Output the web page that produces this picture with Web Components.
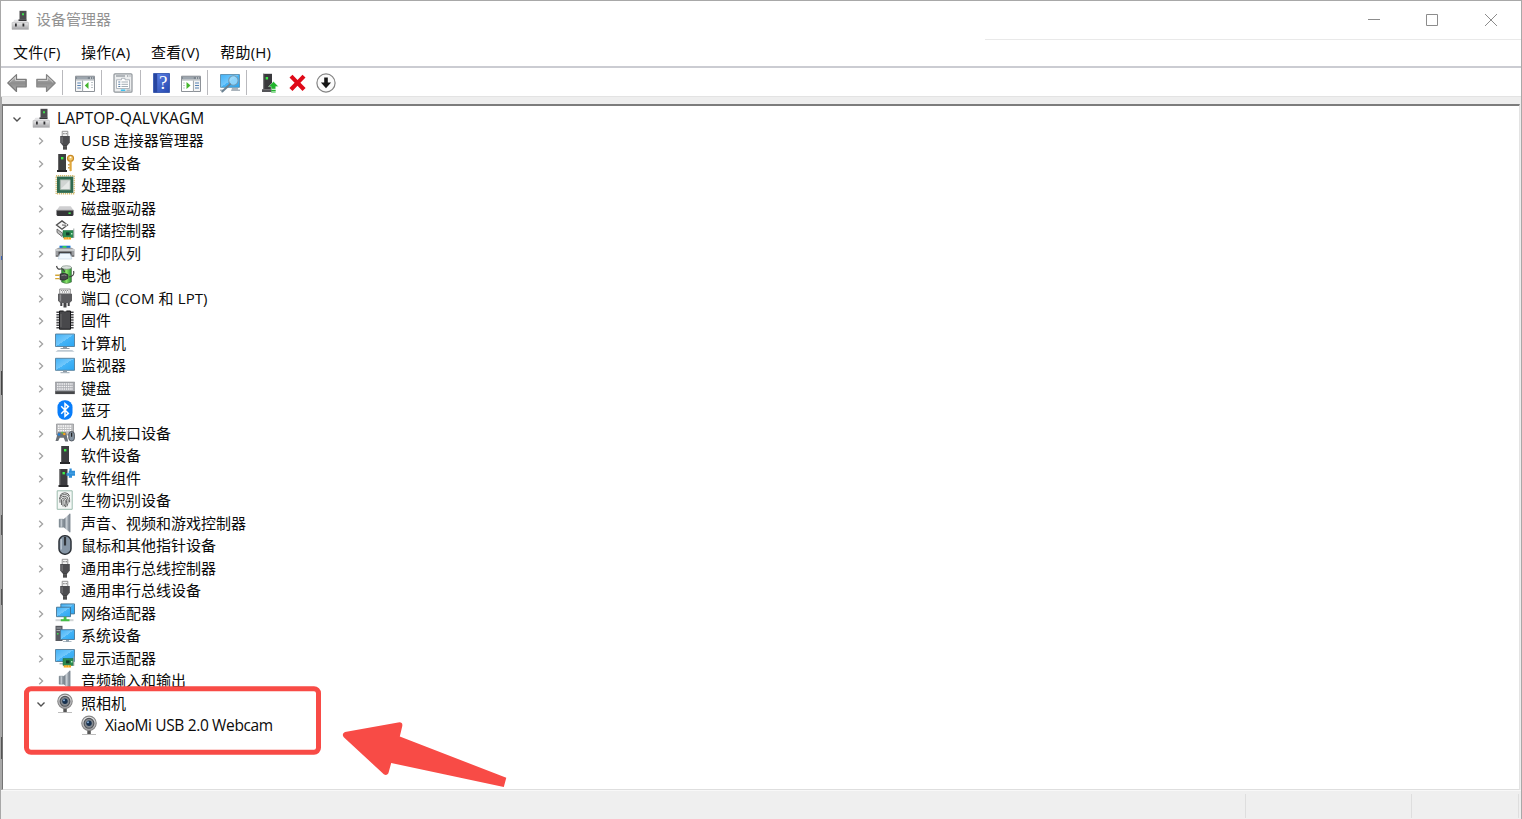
<!DOCTYPE html>
<html lang="zh-CN">
<head>
<meta charset="utf-8">
<title>设备管理器</title>
<style>
  html, body {
    margin: 0;
    height: 100%;
    overflow: hidden;
  }

  body {
    font-family: "Open Sans", "Noto Sans CJK SC", sans-serif;
    font-size: 15px;
    color: #0a0a0a;
  }
</style>
</head>
<body>
<dm-window>
  <dm-titlebar slot="title">设备管理器</dm-titlebar>
  <dm-menubar slot="menu">
    <span>文件(F)</span>
    <span>操作(A)</span>
    <span>查看(V)</span>
    <span>帮助(H)</span>
  </dm-menubar>
  <dm-toolbar slot="toolbar"></dm-toolbar>
  <dm-tree></dm-tree>
  <dm-statusbar slot="status"></dm-statusbar>
  <dm-highlight slot="overlay"></dm-highlight>
</dm-window>

<script>
const DEFS = `
  <defs>
    <linearGradient id="metal" x2="0" y2="1"><stop stop-color="#e9e9ea"/><stop offset="1" stop-color="#a3a3a6"/></linearGradient>
    <linearGradient id="screen" x2="1" y2="1"><stop stop-color="#43b1f5"/><stop offset=".5" stop-color="#72c8fc"/><stop offset=".5" stop-color="#45b4f7"/><stop offset="1" stop-color="#2ba6f2"/></linearGradient>
    <linearGradient id="arrow" x2="0" y2="1"><stop stop-color="#c9c9c9"/><stop offset=".5" stop-color="#8d8d8d"/><stop offset="1" stop-color="#b0b0b0"/></linearGradient>
    <linearGradient id="side"><stop stop-color="#5d6873"/><stop offset=".5" stop-color="#c9d0d6"/><stop offset="1" stop-color="#707b86"/></linearGradient>
    <linearGradient id="help" x2="1" y2="1"><stop stop-color="#6286ea"/><stop offset="1" stop-color="#2447ae"/></linearGradient>
    <linearGradient id="green"><stop stop-color="#1f8a2c"/><stop offset=".5" stop-color="#8be36a"/><stop offset="1" stop-color="#238c2b"/></linearGradient>
  </defs>`;

const TOWER = `<path d="M6 1h8v16H6z" fill="#3d3d40"/><path d="M6 1h1v16H6z" fill="#666"/><path d="M5 17h10v2H5z" fill="#29292b"/><path d="M9 4h2.4v2.4H9z" fill="#3df04a"/>`;
const USB = `<path d="M7.2 1.3h5.6V7H7.2z" fill="#f3f3f3" stroke="#8b8b8b" stroke-width=".9"/><path d="M8.3 3h1.2v1.3H8.3zM10.6 3h1.2v1.3h-1.2z" fill="#777"/><path d="M5.2 6h9.6v6.4l-2.3 3h-5l-2.3-3z" fill="#4d4d50"/><path d="M6.5 7h1.2v6H6.5z" fill="#77777a"/><path d="M8 15h4v4.6H8z" fill="#3c3c3e"/><path d="M8 16.4h4M8 18h4" stroke="#777" stroke-width=".6"/>`;
const SPEAKER = `<path d="M4.2 6.2h4.2v8H4.2z" fill="url(#side)" stroke="#72808b" stroke-width=".5"/><path d="M8.6 6.2L14.6.8v18.4l-6-5z" fill="url(#side)"/><path d="M14.8.8v18.4" stroke="#7d8791" stroke-width="1.3"/>`;
const CAMERA = `<path d="M8.3 15h3.5v4H8.3z" fill="#555"/><path d="M3 19.5h14" stroke="#b6b6b6" stroke-width=".9"/><circle cx="10" cy="8.3" r="7.2" fill="url(#metal)" stroke="#858585" stroke-width="1.1"/><circle cx="10" cy="8.3" r="4.9" fill="#858a90" stroke="#505357" stroke-width="1.1"/><circle cx="10" cy="8.3" r="2.7" fill="#17314f"/><circle cx="9" cy="7.2" r="1" fill="#86aed6"/>`;
const CARD = `<path d="M8 10.5h10.5v7H8z" fill="#2a8a50" stroke="#17693a" stroke-width=".5"/><path d="M18.8 8.5v9.3" stroke="#9da5a4" stroke-width="1"/><path d="M11 12.4h3.6v3H11z" fill="#123f2b"/><path d="M16 13h1.4v1.4H16z" fill="#b6efc6"/><path d="M8.7 17.3h7.3v2.2H8.7z" fill="#f2a51c"/><path d="M11 17.3v2.2M13.5 17.3v2.2" stroke="#fbe190" stroke-width=".5"/>`;
const WINDOW = `<path d="M.5 3.2h19v15.3H.5z" fill="#f4f4f4" stroke="#8d9298"/><path d="M1 3.5h18v3H1z" fill="#7c868f"/><path d="M1.8 5h11" stroke="#dce3e9" stroke-width=".7"/><path d="M15 4.4h1v1h-1zM17.2 4.4h1v1h-1z" fill="#fff"/><path d="M1 7.2h18" stroke="#c3c8cc"/>`;

const ICONS = {
  host: `<path d="M9.5.8h7v9h-7z" fill="#4c4c4f"/><path d="M12 3.2h2v2h-2z" fill="#40dd4e"/><path d="M4.5 9.8h12.3l1.7 3.5H2.2z" fill="#e4e4e6"/><path d="M8.5 9.4h8v1.6h-8z" fill="#353538"/><path d="M2 12.6h16.5v6.8H2z" fill="url(#metal)" stroke="#b0b0b2" stroke-width=".5"/><path d="M5 13.6h1.8v2.8H5zM12.5 13.6h1.8v2.8h-1.8z" fill="#303033"/>`,
  usb: USB,
  security: `<g transform="translate(-3 0)">${TOWER}</g><circle cx="15.5" cy="5.3" r="3" fill="#f0c66b" stroke="#c88924" stroke-width="1.2"/><circle cx="15.5" cy="4.3" r=".9" fill="#fff"/><path d="M14.5 8.3h2.2v9l-1.2 1.3-1-1z" fill="#e0a83e"/><path d="M14.5 11h-1.3v1.5h1.3M14.5 14h-1.3v1.5h1.3" fill="#c88924"/>`,
  cpu: `<path d="M1.2 .8h18v18h-18z" fill="none" stroke="#c9a94c" stroke-width="1.4" stroke-dasharray="1 1"/><path d="M2 1.6h16.3v16.3H2z" fill="#2e6a50"/><path d="M5.2 4.8h10v10h-10z" fill="#d0d4d2" stroke="#9bac9f" stroke-width=".7"/><path d="M14.5 5.4v8.7H5.8z" fill="#e6e9e7"/>`,
  disk: `<path d="M4.5 8.2h11.2l3 4.4H1.5z" fill="#cfcfd1"/><path d="M1.5 12.3h17v4.8l-1 .8h-15l-1-.8z" fill="#353538"/><path d="M1.5 12.3h17" stroke="#88888b" stroke-width=".7"/><path d="M13.5 14.4h2.2V16h-2.2z" fill="#42e650"/>`,
  storage: `<path d="M7 .9l5.5 4-5.5 4.3L1.5 5z" fill="#f7f7f7" stroke="#505050" stroke-width="1.3"/><path d="M6 5h6" stroke="#f7f7f7" stroke-width="2.4"/><path d="M7 5l4.5.2" stroke="#555" stroke-width="1.1"/><path d="M2 9l6 4.5-1 3-5-4z" fill="#bcbcbc" stroke="#555" stroke-width=".8"/>${CARD}`,
  printer: `<path d="M4.5 2.7h11v4h-11z" fill="#1674d4"/><path d="M7.5 3h4v2.5h-4z" fill="#30cc56"/><path d="M.5 6.3l3-1.5h13l3 1.5v7.5H.5z" fill="#9c9ea1"/><path d="M.5 6.2h19v1.6H.5z" fill="#d4d6d8"/><path d="M3.5 8.7h13v3.8h-13z" fill="#424346"/><path d="M5 10.5h10l1.8 5.5H3.2z" fill="#eff8ff" stroke="#b1c8da" stroke-width=".5"/><path d="M1 13h2M17 13h2" stroke="#555"/>`,
  battery: `<path d="M6.5 2.5h10V17q-5 3-10 0z" fill="url(#green)" stroke="#4c634d" stroke-width=".5"/><ellipse cx="11.5" cy="2.5" rx="5" ry="1.8" fill="#d9e1dc" stroke="#718075" stroke-width=".6"/><path d="M1.5 1q1 4 4 3t4 3M14 12q6-1 4.6-6" fill="none" stroke="#444" stroke-width="1.2"/><path d="M5 9q5-1.6 8 .8v3.6q-3 2.6-8 1.4z" fill="#45464a" stroke="#222" stroke-width=".6"/><path d="M6.5 10.6q3-1.2 5 0" fill="none" stroke="#888"/><path d="M.2 10.3h4.5M.2 13.6h4.5" stroke="#d3a535" stroke-width="1.4"/>`,
  port: `<path d="M4.7 1h10.6v5H4.7z" fill="#f3f3f3" stroke="#7a7a7a" stroke-width=".8"/><path d="M6.2 2.5h8M7 4h6.5" stroke="#777" stroke-width="1" stroke-dasharray="1 1"/><path d="M3 5.7h14v7l-2.3 2.3H5.3L3 12.7z" fill="#5c5c5f"/><path d="M4.6 6.5h1.6v7H4.6z" fill="#8c8c8e"/><path d="M5.3 15h2v3h-2zM12.7 15h2v3h-2zM8.5 15h3v4.5h-3z" fill="#444447"/>`,
  firmware: `<path d="M2.8 1.4v18M17.2 1.4v18" stroke="#49494c" stroke-width="2.8" stroke-dasharray="1.6 1"/><path d="M4.5 1h3.7q1.8 2.5 3.6 0h3.7v18.2h-11z" fill="#48484b" stroke="#151517" stroke-width="1"/><path d="M6 4v13" stroke="#68686a"/>`,
  computer: `<path d="M.5 1h19v12.5H.5z" fill="url(#screen)" stroke="#557d98" stroke-width=".9"/><path d="M8 14h4v1.5H8z" fill="#8f9ba5"/><path d="M5.5 15.5h9" stroke="#8f9ba5" stroke-width="1"/><path d="M2.8 17.1h14.4l2.3 1.7H.5z" fill="#bec9d2"/>`,
  monitor: `<path d="M.5 3.3h19v12H.5z" fill="url(#screen)" stroke="#557d98" stroke-width=".9"/><path d="M8 15.5h4v1.6H8z" fill="#8f9ba5"/><path d="M5.5 17.7h9" stroke="#9ba8b3" stroke-width="1"/>`,
  keyboard: `<path d="M.3 4h19.4v10H.3z" fill="#a8aaaf" stroke="#828489" stroke-width=".5"/><path d="M2 6h16M2 8.5h16M2 11h16" stroke="#f4f4f5" stroke-width="1.3" stroke-dasharray="1.5 .7"/><path d="M.2 13.3h19.6v2.8H.2z" fill="#46474a"/>`,
  bluetooth: `<rect x="2.5" y=".3" width="15" height="19.4" rx="7" fill="#087dfa"/><path d="M6.2 6.2l7.2 7.2-3.4 3V3.6l3.4 3-7.2 7.2" fill="none" stroke="#fff" stroke-width="1.5"/>`,
  hid: `<path d="M1.5 1h17v11h-17z" fill="#bdbec0" stroke="#8b8c8f" stroke-width=".7"/><path d="M3 3h14M3 5.3h14M3 7.6h14" stroke="#fff" stroke-width="1.3" stroke-dasharray="1.5 .8"/><path d="M3 9.2h8l2.2 9.3h-3l-1.5-3.7H4.8L3.2 18H.5z" fill="#6b7076"/><circle cx="4" cy="11.5" r="1.3" fill="#227fd8"/><circle cx="9.3" cy="11" r="1.3" fill="#f5a31a"/><circle cx="7.3" cy="9.8" r="1" fill="#62c14b"/><rect x="13.8" y="8.5" width="5.6" height="9.5" rx="2.8" fill="#8694a2" stroke="#43484e" stroke-width=".8"/><path d="M16.6 9.8v4" stroke="#222" stroke-width="1.2"/>`,
  device: TOWER,
  component: `<g transform="translate(-1.5 0)">${TOWER}</g><path d="M14.5.5h2.2v2.2H20v5h-3v2.1h-3.2V7.7h-2.3V5h2.3V2.7h.7z" fill="#2e8ed8"/><path d="M12 5.2h8" stroke="#55afed" stroke-width=".7"/>`,
  fingerprint: `<path d="M2.2.8h15v18.5h-15z" fill="#f5f8f6" stroke="#9bbbad" stroke-width="1"/><g fill="none" stroke="#555" stroke-width=".9"><path d="M5 6q1-3.2 4.8-3.2T14.5 6M4.6 9q0-4.4 5-4.4t5 4.7v3M5 12.7V9.6q0-3.2 4.7-3.2 3.5 0 3.5 3.7 0 4-1.4 6.5M6.5 15V10q.2-2 3-2 2.1 0 2.1 2.2 0 4-1.3 7M8 16.5V11q.1-1.4 1.3-1.4 1 0 1 1.3 0 3-1 5.5"/></g>`,
  speaker: SPEAKER,
  mouse: `<rect x="4" y=".8" width="12" height="18.4" rx="5.5" fill="#8696a6" stroke="#2d3238" stroke-width="1.5"/><path d="M6.2 4v10.5" stroke="#c3ced8" stroke-width="1.2"/><path d="M10 2v8.5" stroke="#31363b" stroke-width="2.2"/>`,
  network: `<path d="M5.8.9h13.7v10H5.8z" fill="url(#screen)" stroke="#3b6887" stroke-width=".8"/><path d="M1.5 4.2h14v9.5h-14z" fill="url(#screen)" stroke="#3b6887" stroke-width=".8"/><path d="M.5 16.2h18v2H.5z" fill="#d1d4d5"/><path d="M8.7 13.8h2.8v2.4h3v2H5.8v-2h2.9z" fill="#43bd46"/>`,
  system: `<path d="M.5.8h7V16h-7z" fill="#56595f"/><path d="M1.5 3h4.8M1.5 5.5h4.8" stroke="#a7abb0"/><path d="M2 8h1.5v1.5H2z" fill="#42df50"/><path d="M5.5 4.7h14v9.8h-14z" fill="url(#screen)" stroke="#4c7794" stroke-width=".9"/><path d="M11 15h3v1.2h2.5v.9H8v-.9h3z" fill="#94a4b0"/>`,
  display: `<path d="M.5 1.5h19v12H.5z" fill="url(#screen)" stroke="#557d98" stroke-width=".9"/><path d="M4.5 15.8h5" stroke="#8f9ba5"/>${CARD}`,
  camera: CAMERA,

  back: `<path d="M.8 10L9.5 1.6v4.8h9.7v7.4H9.5v4.7z" fill="url(#arrow)" stroke="#7b7b7b" stroke-width="1.2" stroke-linejoin="round"/><path d="M2.5 9.6L8.5 4v3.5h9.5" fill="none" stroke="#d7d7d7" stroke-width=".8"/>`,
  forward: `<path d="M19.2 10l-8.7-8.4v4.8H.8v7.4h9.7v4.7z" fill="url(#arrow)" stroke="#858585" stroke-width="1.2" stroke-linejoin="round"/><path d="M2 7.5h9.5V4l5.8 5.6" fill="none" stroke="#d7d7d7" stroke-width=".8"/>`,
  console: `${WINDOW}<path d="M7.5 7.5v11" stroke="#a4abb0"/><path d="M2.3 10h3.6M2.3 12.5h3.6M2.3 15h3.6" stroke="#5682b3" stroke-width="1.1"/><path d="M9 8h10v10H9z" fill="#fff"/><path d="M13.5 9v7L9.8 12.5z" fill="#45b52d"/><path d="M16 9.5h2M16 12h2M16 14.5h2" stroke="#bdc4c8"/>`,
  properties: `<rect x="1" y=".8" width="18" height="18.4" rx="1" fill="#eceeef" stroke="#90969b" stroke-width="1.2"/><path d="M3 3h9M14 3h1.3M16.5 3h1" stroke="#777f86"/><path d="M3.5 6.8h5v-1.5h3.5v1.5h4.5v8.7h-13z" fill="#fff" stroke="#a0a7ae" stroke-width=".8"/><path d="M5.3 9h2M5.3 11.3h2M5.3 13.5h2" stroke="#547aa0"/><path d="M8.5 9H15M8.5 11.3H15M8.5 13.5H15" stroke="#a3adb5"/><path d="M7.8 17.2h4.5" stroke="#2abcf0" stroke-width="1.4"/><path d="M13.5 17.2h4" stroke="#a6acb2" stroke-width="1.2"/>`,
  help: `<path d="M1.5.5h16v19h-16z" fill="url(#help)" stroke="#294da8" stroke-width=".8"/><path d="M2 .8h3.2v18.4H2z" fill="#2745a0"/>`,
  action: `${WINDOW}<path d="M1 8h10.5v10H1z" fill="#fff"/><path d="M5.5 9v7l4-3.5z" fill="#45b52d"/><path d="M12.5 7.5v11" stroke="#a4abb0"/><path d="M14 10h4M14 12.5h4M14 15h4" stroke="#5682b3" stroke-width="1.1"/><path d="M2 10h2M2 12.5h2M2 15h2" stroke="#c4cacf"/>`,
  scan: `<path d="M.5 1.5h19v12.8H.5z" fill="url(#screen)" stroke="#5b8eae" stroke-width=".9"/><path d="M12 15h6v1.5h2v1.6h-9zM0 16.5h3v1.6H0z" fill="#abb4bc"/><circle cx="13.4" cy="7.5" r="4.7" fill="#a9dffb" fill-opacity=".75" stroke="#719bb5" stroke-width="1.1"/><path d="M10 11.2L2.3 18.5" stroke="#6b8292" stroke-width="2" stroke-linecap="round"/>`,
  update: `<path d="M4 .8h9v15.4H4z" fill="#39393c"/><path d="M4 .8h1.2v15.4H4z" fill="#77777a"/><path d="M3 16.2h9.5V19H3z" fill="#555559"/><path d="M6.7 4h2.4v2.5H6.7z" fill="#3cec49"/><path d="M14.5 8.6l5 5h-2.8V16h-4.5v-2.4H9.5z" fill="#21b52d" stroke="#fff" stroke-width=".4"/><path d="M12.2 16.8h4.5V18h-4.5zM12.2 18.6h4.5v1h-4.5z" fill="#21b52d"/>`,
  remove: `<path d="M1.5 4.6L4.5 1.8l5 5.1 5-5.1 3 2.8-5.1 5.2 5.2 5.3-3.1 2.8-5-5.1-5 5.1-3.1-2.8L6.6 9.8z" fill="#df0a18"/>`,
  disable: `<circle cx="10" cy="10" r="9.1" fill="#fbfbfb" stroke="#848484" stroke-width="1.2"/><path d="M8.2 4.5h3.6v5h3.3L10 15.2 4.9 9.5h3.3z" fill="#161616"/>`,
};

class DmIcon extends HTMLElement {
  constructor() {
    super();
    this.attachShadow({ mode: "open" });
  }

  connectedCallback() {
    const name = this.getAttribute("name");
    this.shadowRoot.innerHTML = `
      <style>
        :host {
          display: grid;
          flex: none;
          width: 20px;
          height: 20px;
        }
        svg, span {
          grid-area: 1 / 1;
          display: block;
        }
        span {
          color: white;
          font: 19px/20px "Liberation Serif", serif;
          text-align: center;
          padding-left: 2px;
          z-index: 1;
        }
      </style>
      <svg width="20" height="20" viewBox="0 0 20 20">${DEFS}${ICONS[name]}</svg>
      ${name === "help" ? "<span>?</span>" : ""}
    `;
  }
}
customElements.define("dm-icon", DmIcon);

class DmWindow extends HTMLElement {
  constructor() {
    super();
    this.attachShadow({ mode: "open" });
    this.shadowRoot.innerHTML = `
      <style>
        :host {
          position: relative;
          display: flex;
          flex-direction: column;
          box-sizing: border-box;
          height: 819px;
          width: 1522px;
          border-top: 1px solid #a8a8a8;
          border-left: 1px solid #a8a8a8;
          border-right: 1px solid #a8a8a8;
          background: white;
          overflow: hidden;
        }
        /* sliver of the desktop seen past the window's corner */
        .corner {
          position: absolute;
          top: -1px;
          right: -1px;
          width: 87px;
          height: 1px;
          background: #3658a6;
        }
        .corner::after {
          content: "";
          position: absolute;
          right: 0;
          top: 0;
          width: 1px;
          height: 26px;
          background: #3658a6;
        }
      </style>
      <slot name="title"></slot>
      <slot name="menu"></slot>
      <slot name="toolbar"></slot>
      <slot></slot>
      <slot name="status"></slot>
      <slot name="overlay"></slot>
      <div class="corner"></div>
    `;
  }
}
customElements.define("dm-window", DmWindow);

class DmTitlebar extends HTMLElement {
  constructor() {
    super();
    this.attachShadow({ mode: "open" });
    this.shadowRoot.innerHTML = `
      <style>
        :host {
          display: flex;
          flex: none;
          align-items: center;
          box-sizing: border-box;
          height: 39px;
          padding: 0 23px 2px 9px;
          color: #929292;
          background: linear-gradient(#e9e9e9, #e9e9e9) 984px 38px / 100% 1px no-repeat;
        }
        .text {
          flex: 1;
          margin-left: 6px;
          padding-bottom: 2px;
        }
        .controls {
          display: flex;
          gap: 45px;
        }
        svg {
          display: block;
          fill: none;
          stroke: #8c8c8c;
        }
      </style>
      <dm-icon name="host"></dm-icon>
      <span class="text"><slot></slot></span>
      <div class="controls">
        <svg width="14" height="14"><path d="M1 6.5h12"/></svg>
        <svg width="13" height="14"><path d="M.5 1.5h11v11H.5z"/></svg>
        <svg width="14" height="14"><path d="M1 1l12 12M13 1L1 13"/></svg>
      </div>
    `;
  }
}
customElements.define("dm-titlebar", DmTitlebar);

class DmMenubar extends HTMLElement {
  constructor() {
    super();
    this.attachShadow({ mode: "open" });
    this.shadowRoot.innerHTML = `
      <style>
        :host {
          display: flex;
          flex: none;
          align-items: center;
          gap: 20.5px;
          box-sizing: border-box;
          height: 28px;
          padding: 0 12px 3px;
          border-bottom: 2px solid #cbccd2;
        }
        ::slotted(span) {
          white-space: nowrap;
          letter-spacing: 0.2px;
        }
      </style>
      <slot></slot>
    `;
  }
}
customElements.define("dm-menubar", DmMenubar);

class DmToolbar extends HTMLElement {
  constructor() {
    super();
    this.attachShadow({ mode: "open" });
    const items = ["back", "forward", "|", "console", "|", "properties", "|", "help", "action", "|", "scan", "|", "update", "remove", "disable"];
    this.shadowRoot.innerHTML = `
      <style>
        :host {
          display: flex;
          flex: none;
          align-items: center;
          box-sizing: border-box;
          height: 29px;
          padding-left: 6px;
          padding-top: 1px;
          border-bottom: 1px solid #e3e3e3;
        }
        dm-icon {
          margin-right: 8.9px;
        }
        i {
          width: 1px;
          height: 25px;
          margin: 0 11.7px 0 -2.8px;
          background: #b9b9bd;
        }
      </style>
      ${items.map((name) => (name === "|" ? "<i></i>" : `<dm-icon name="${name}"></dm-icon>`)).join("")}
    `;
  }
}
customElements.define("dm-toolbar", DmToolbar);

class DmTreeItem extends HTMLElement {
  constructor() {
    super();
    this.attachShadow({ mode: "open" });
  }

  connectedCallback() {
    const state = this.getAttribute("state");
    const chevrons = {
      open: `<path d="M1.5 3.5L5 7l3.5-3.5" stroke="#505050" stroke-width="1.4"/>`,
      closed: `<path d="M3.2 1.7L6.6 5 3.2 8.3" stroke="#a3a3a3" stroke-width="1.3"/>`,
    };
    this.shadowRoot.innerHTML = `
      <style>
        :host {
          display: flex;
          align-items: center;
          height: 22.5px;
          padding-left: calc(8px + 24px * var(--level, 0));
          white-space: nowrap;
        }
        .toggle {
          flex: none;
          margin: 2px 9px 0 0;
          fill: none;
        }
        .label {
          margin-left: 6.4px;
          font-size: var(--size, 15px);
          line-height: 22px;
          letter-spacing: var(--tracking, 0);
        }
      </style>
      <svg class="toggle" width="10" height="10">${chevrons[state] || ""}</svg>
      <dm-icon name="${this.getAttribute("icon")}"></dm-icon>
      <span class="label"><slot></slot></span>
    `;
  }
}
customElements.define("dm-tree-item", DmTreeItem);

// label, icon, level, state, letter-spacing, font size
const DEVICES = [
  ["LAPTOP-QALVKAGM", "host", 0, "open", "0.1px", "15.5px"],
  ["USB 连接器管理器", "usb", 1, "closed"],
  ["安全设备", "security", 1, "closed"],
  ["处理器", "cpu", 1, "closed"],
  ["磁盘驱动器", "disk", 1, "closed"],
  ["存储控制器", "storage", 1, "closed"],
  ["打印队列", "printer", 1, "closed"],
  ["电池", "battery", 1, "closed"],
  ["端口 (COM 和 LPT)", "port", 1, "closed", "0.1px"],
  ["固件", "firmware", 1, "closed"],
  ["计算机", "computer", 1, "closed"],
  ["监视器", "monitor", 1, "closed"],
  ["键盘", "keyboard", 1, "closed"],
  ["蓝牙", "bluetooth", 1, "closed"],
  ["人机接口设备", "hid", 1, "closed"],
  ["软件设备", "device", 1, "closed"],
  ["软件组件", "component", 1, "closed"],
  ["生物识别设备", "fingerprint", 1, "closed"],
  ["声音、视频和游戏控制器", "speaker", 1, "closed"],
  ["鼠标和其他指针设备", "mouse", 1, "closed"],
  ["通用串行总线控制器", "usb", 1, "closed"],
  ["通用串行总线设备", "usb", 1, "closed"],
  ["网络适配器", "network", 1, "closed"],
  ["系统设备", "system", 1, "closed"],
  ["显示适配器", "display", 1, "closed"],
  ["音频输入和输出", "speaker", 1, "closed"],
  ["照相机", "camera", 1, "open"],
  ["XiaoMi USB 2.0 Webcam", "camera", 2, "none", "-0.35px", "15.5px"],
];

class DmTree extends HTMLElement {
  constructor() {
    super();
    this.attachShadow({ mode: "open" });
    this.shadowRoot.innerHTML = `
      <style>
        :host {
          display: flex;
          flex: 1;
          min-height: 0;
          padding-top: 7px;
          background: #eee;
        }
        .edge {
          flex: none;
          width: 1px;
          margin-top: -7px;
          background:
            linear-gradient(#3b62b8, #3b62b8) 0 159px / 1px 4px no-repeat,
            linear-gradient(#444, #444) 0 274px / 1px 24px no-repeat,
            linear-gradient(#555, #555) 0 418px / 1px 20px no-repeat,
            linear-gradient(#555, #555) 0 492px / 1px 16px no-repeat,
            linear-gradient(#555, #555) 0 640px / 1px 22px no-repeat,
            #a8a8a8;
        }
        .view {
          flex: 1;
          box-sizing: border-box;
          border: 2px solid #7c7c7c;
          border-left: 1px solid #747474;
          border-right: 1px solid #e3e3e3;
          border-bottom: 1px solid #dedede;
          margin-right: 1px;
          padding-left: .6px;
          padding-top: .25px;
          background: white;
        }
      </style>
      <div class="edge"></div>
      <div class="view">
        ${DEVICES.map(([label, icon, level, state, tracking, size]) => `
          <dm-tree-item icon="${icon}" state="${state}" style="--level:${level};--tracking:${tracking || "0"};--size:${size || "15px"}">${label}</dm-tree-item>`).join("")}
      </div>
    `;
  }
}
customElements.define("dm-tree", DmTree);

class DmStatusbar extends HTMLElement {
  constructor() {
    super();
    this.attachShadow({ mode: "open" });
    this.shadowRoot.innerHTML = `
      <style>
        :host {
          display: flex;
          flex: none;
          box-sizing: border-box;
          height: 29px;
          padding: 3px 2px 1px 0;
          border-top: 1px solid #f8f8f8;
          background: #efefef;
        }
        div {
          box-sizing: border-box;
          border-right: 1px solid #dedede;
        }
        .main { flex: 1; }
        .mid { width: 166px; }
        .end { width: 107px; }
      </style>
      <div class="main"></div>
      <div class="mid"></div>
      <div class="end"></div>
    `;
  }
}
customElements.define("dm-statusbar", DmStatusbar);

// red frame and arrow drawn over the tree
class DmHighlight extends HTMLElement {
  constructor() {
    super();
    this.attachShadow({ mode: "open" });
    this.shadowRoot.innerHTML = `
      <style>
        :host {
          position: absolute;
          left: 22px;
          top: 684px;
          pointer-events: none;
        }
        svg { display: block; }
      </style>
      <svg width="490" height="106" viewBox="23 685 490 106">
        <rect x="26.5" y="688.8" width="292" height="63.4" rx="4.5" fill="none" stroke="#f84b46" stroke-width="5"/>
        <path d="M345 732L399.5 722.2Q402.8 722.2 402.3 726L399.8 736.6 506.3 777.7 503.8 787.1 391.2 763 388.4 773.3Q386.5 776.2 383.8 774.2L343.8 737.3Q341.3 733.8 345 732z" fill="#f84b46"/>
      </svg>
    `;
  }
}
customElements.define("dm-highlight", DmHighlight);
</script>
</body>
</html>
